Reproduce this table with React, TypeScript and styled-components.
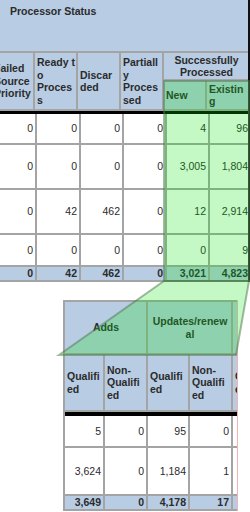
import React from 'react';
import styled, { createGlobalStyle } from 'styled-components';

const Global = createGlobalStyle`
  * { box-sizing: border-box; }
  body { margin: 0; background: #fff; }
`;

const BLUE = '#b8cce4';
const GRID = '#a4a4a4';

const Page = styled.div`
  position: relative;
  width: 250px;
  height: 512px;
  overflow: hidden;
  background: #fff;
  font-family: "Liberation Sans", Arial, sans-serif;
  color: #2b2b2b;
`;

/* upper report, cut off on the left */
const TopTable = styled.div`
  width: 258px;
  margin-left: -8px;
  background: ${GRID};
  border-right: 2px solid #111;
`;

const Title = styled.div`
  height: 51px;
  margin-bottom: 2px;
  padding: 5px 0 0 18px;
  background: ${BLUE};
  font-size: 10.5px;
  font-weight: bold;
  line-height: 12px;
`;

const HeadGrid = styled.div<{ $cols: string; $rows: string }>`
  display: grid;
  grid-template-columns: ${p => p.$cols};
  grid-template-rows: ${p => p.$rows};
  gap: 2px;
  padding-bottom: 2px;
`;

const HeadCell = styled.div<{ $col?: string; $row?: string; $center?: boolean }>`
  grid-column: ${p => p.$col ?? 'auto'};
  grid-row: ${p => p.$row ?? 'auto'};
  display: flex;
  align-items: center;
  justify-content: ${p => (p.$center ? 'center' : 'flex-start')};
  text-align: ${p => (p.$center ? 'center' : 'left')};
  padding: 0 1px 0 2px;
  background: ${BLUE};
  font-size: 10.5px;
  font-weight: bold;
  line-height: 12.5px;
  white-space: nowrap;
  overflow: hidden;
`;

const ThickRule = styled.div<{ $h: number }>`
  height: ${p => p.$h}px;
  background: #000;
`;

const BodyGrid = styled.div<{ $cols: string; $rows: string }>`
  display: grid;
  grid-template-columns: ${p => p.$cols};
  grid-template-rows: ${p => p.$rows};
  gap: 2px;
  padding-bottom: 2px;
`;

const NumCell = styled.div<{ $total?: boolean; $flush?: boolean }>`
  display: flex;
  align-items: center;
  justify-content: flex-end;
  padding-right: ${p => (p.$flush ? 0 : 2)}px;
  background: ${p => (p.$total ? BLUE : '#fff')};
  font-size: 10.5px;
  font-weight: ${p => (p.$total ? 'bold' : 'normal')};
  line-height: 13px;
  white-space: nowrap;
  overflow: hidden;
`;

/* zoomed-in lower report */
const BottomTable = styled.div`
  width: 175px;
  margin: 18px 0 0 63px;
  padding: 2px 0 0 2px;
  background: ${GRID};
  border-right: 1px solid #f0b4b4;
  overflow: hidden;
`;

const Overlay = styled.svg`
  position: absolute;
  left: 0;
  top: 0;
  pointer-events: none;
`;

const Lines = ({ text }: { text: string[] }) => (
  <span>
    {text.map((t, i) => (
      <React.Fragment key={i}>
        {i > 0 && <br />}
        {t}
      </React.Fragment>
    ))}
  </span>
);

const topRows = [
  ['0', '0', '0', '0', '4', '96'],
  ['0', '0', '0', '0', '3,005', '1,804'],
  ['0', '42', '462', '0', '12', '2,914'],
  ['0', '0', '0', '0', '0', '9'],
];
const topTotal = ['0', '42', '462', '0', '3,021', '4,823'];

const bottomRows = [
  ['5', '0', '95', '0', ''],
  ['3,624', '0', '1,184', '1', ''],
];
const bottomTotal = ['3,649', '0', '4,178', '17', ''];

export default function App() {
  return (
    <Page>
      <Global />
      <TopTable>
        <Title>Processor Status</Title>
        <HeadGrid $cols="repeat(6, 41px)" $rows="26px 28px">
          <HeadCell $row="1 / 3"><Lines text={['Failed', 'Source', 'Priority']} /></HeadCell>
          <HeadCell $row="1 / 3"><Lines text={['Ready t', 'o', 'Proces', 's']} /></HeadCell>
          <HeadCell $row="1 / 3"><Lines text={['Discar', 'ded']} /></HeadCell>
          <HeadCell $row="1 / 3"><Lines text={['Partiall', 'y', 'Proces', 'sed']} /></HeadCell>
          <HeadCell $col="5 / 7" $center><Lines text={['Successfully', 'Processed']} /></HeadCell>
          <HeadCell>New</HeadCell>
          <HeadCell><Lines text={['Existin', 'g']} /></HeadCell>
        </HeadGrid>
        <ThickRule $h={3} />
        <BodyGrid $cols="43px 42px 41px 41px 41px 38px" $rows="29px 43px 43px 30px 13px">
          {topRows.map((r, i) =>
            r.map((v, j) => (
              <NumCell key={`${i}-${j}`} $flush={j === 5}>{v}</NumCell>
            ))
          )}
          {topTotal.map((v, j) => (
            <NumCell key={`t-${j}`} $total $flush={j === 5}>{v}</NumCell>
          ))}
        </BodyGrid>
      </TopTable>

      <BottomTable>
        <HeadGrid $cols="38px 41px 40px 41px 40px" $rows="51px 55px">
          <HeadCell $col="1 / 3" $center>Adds</HeadCell>
          <HeadCell $col="3 / 5" $center><Lines text={['Updates/renew', 'al']} /></HeadCell>
          <HeadCell />
          <HeadCell><Lines text={['Qualifi', 'ed']} /></HeadCell>
          <HeadCell><Lines text={['Non-', 'Qualifi', 'ed']} /></HeadCell>
          <HeadCell><Lines text={['Qualifi', 'ed']} /></HeadCell>
          <HeadCell><Lines text={['Non-', 'Qualifi', 'ed']} /></HeadCell>
          <HeadCell><Lines text={['Qualifi', 'ed']} /></HeadCell>
        </HeadGrid>
        <ThickRule $h={4} />
        <BodyGrid $cols="38px 41px 40px 41px 40px" $rows="30px 46px 13px">
          {bottomRows.map((r, i) =>
            r.map((v, j) => <NumCell key={`${i}-${j}`}>{v}</NumCell>)
          )}
          {bottomTotal.map((v, j) => (
            <NumCell key={`t-${j}`} $total>{v}</NumCell>
          ))}
        </BodyGrid>
      </BottomTable>

      <Overlay width="250" height="512" viewBox="0 0 250 512">
        <g fill="rgba(10,226,10,0.24)" stroke="rgba(80,115,80,0.5)" strokeWidth="2">
          <path d="M164 81 H249 V281 H164 Z" />
          <path d="M164 281 H249 L236 355 H59 Z" />
        </g>
      </Overlay>
    </Page>
  );
}
